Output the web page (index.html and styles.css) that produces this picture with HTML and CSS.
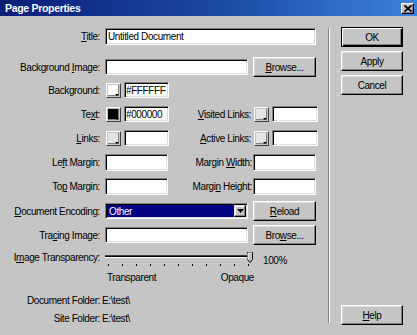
FILE: index.html
```html
<!DOCTYPE html>
<html>
<head>
<meta charset="utf-8">
<title>Page Properties</title>
<link rel="stylesheet" href="styles.css">
</head>
<body>
<div class="win">
  <div class="titlebar">
    <span class="ttl">Page Properties</span>
    <span class="close"><svg width="8" height="7" viewBox="0 0 8 7"><path d="M0.5 0.5 L7.5 6.5 M7.5 0.5 L0.5 6.5" stroke="#000" stroke-width="1.8" fill="none"/></svg></span>
  </div>
  <div class="main">
    <div class="form">
      <div class="row r1"><span class="lbl"><u>T</u>itle:</span><div class="inp wide">Untitled Document</div></div>
      <div class="row r2"><span class="lbl">Background <u>I</u>mage:</span><div class="inp mid"></div><div class="btn bw"><span><u>B</u>rowse...</span></div></div>
      <div class="row r3"><span class="lbl">Background:</span><div class="sw"><i class="fill white"></i><i class="tri"></i></div><div class="inp sm">#FFFFFF</div></div>
      <div class="row"><span class="lbl">Te<u>x</u>t:</span><div class="sw"><i class="fill black"></i><i class="tri"></i></div><div class="inp sm">#000000</div><span class="lbl2"><u>V</u>isited Links:</span><div class="sw"><i class="fill light"></i><i class="tri"></i></div><div class="inp sm2"></div></div>
      <div class="row"><span class="lbl"><u>L</u>inks:</span><div class="sw"><i class="fill light"></i><i class="tri"></i></div><div class="inp sm"></div><span class="lbl2"><u>A</u>ctive Links:</span><div class="sw"><i class="fill light"></i><i class="tri"></i></div><div class="inp sm2"></div></div>
      <div class="row"><span class="lbl">Le<u>f</u>t Margin:</span><div class="inp half"></div><span class="lbl3">Margin <u>W</u>idth:</span><div class="inp half"></div></div>
      <div class="row"><span class="lbl">To<u>p</u> Margin:</span><div class="inp half"></div><span class="lbl3">Margi<u>n</u> Height:</span><div class="inp half"></div></div>
      <div class="row r8"><span class="lbl"><u>D</u>ocument Encoding:</span><div class="sel"><span class="selval">Other</span><span class="arrow"><svg width="7" height="4" viewBox="0 0 7 4"><path d="M0 0 H7 L3.5 4 Z" fill="#000"/></svg></span></div><div class="btn bw"><span><u>R</u>eload</span></div></div>
      <div class="row"><span class="lbl">Tra<u>c</u>ing Image:</span><div class="inp mid"></div><div class="btn bw"><span>Bro<u>w</u>se...</span></div></div>
      <div class="slrow">
        <span class="lbl">I<u>m</u>age Transparency:</span>
        <div class="slider">
          <div class="trackwrap">
            <div class="track"></div>
            <svg class="thumb" width="6" height="11" viewBox="0 0 6 11"><path d="M0.5 0.5 H5.5 V7.5 L3 10.5 L0.5 7.5 Z" fill="#c3c3c3" stroke="#000"/><path d="M1 1 H5 M1 1 V7.5" stroke="#fff" fill="none"/></svg>
          </div>
          <div class="ticks"></div>
          <div class="sllabels"><span>Transparent</span><span>Opaque</span></div>
        </div>
        <span class="pct">100%</span>
      </div>
      <div class="frow f1"><span class="lbl">Document Folder:</span><span class="val">E:\test\</span></div>
      <div class="frow f2"><span class="lbl">Site Folder:</span><span class="val">E:\test\</span></div>
    </div>
    <div class="sep"></div>
    <div class="side">
      <div class="btn sb def"><span>OK</span></div>
      <div class="btn sb"><span>Apply</span></div>
      <div class="btn sb"><span>Cancel</span></div>
      <div class="btn sb help"><span><u>H</u>elp</span></div>
    </div>
  </div>
</div>
</body>
</html>
```

FILE: styles.css
```css
html, body {
  margin: 0;
  padding: 0;
  background: #c5c5c5;
}
body {
  font-family: "Liberation Sans", Arial, sans-serif;
  font-size: 10px;
  letter-spacing: -0.4px;
  color: #000;
}
.win {
  width: 417px;
  height: 335px;
  background: #c5c5c5;
  display: flex;
  flex-direction: column;
  overflow: hidden;
}
.titlebar {
  height: 16px;
  flex: none;
  background: linear-gradient(90deg, #0a1e78 0%, #1c4ba6 55%, #3c84d8 100%);
  display: flex;
  align-items: center;
  padding: 0 3px 0 5px;
}
.ttl {
  flex: 1;
  color: #fff;
  font-weight: bold;
  font-size: 10.5px;
  letter-spacing: -0.3px;
}
.close {
  width: 13px;
  height: 11px;
  box-sizing: border-box;
  background: #c5c5c5;
  border: 1px solid;
  border-color: #fff #000 #000 #fff;
  box-shadow: inset -1px -1px #808080;
  display: flex;
  align-items: center;
  justify-content: center;
}
.main {
  flex: 1;
  display: flex;
}
.form {
  width: 328px;
  flex: none;
}
.sep {
  width: 0;
  border-left: 1px solid #808080;
  border-right: 1px solid #fff;
  margin-top: 12px;
  height: 295px;
}
.side {
  flex: 1;
  display: flex;
  flex-direction: column;
  gap: 4px;
  padding: 11px 0 10px 11px;
}
u { text-decoration: underline; text-underline-offset: 1px; }

.row {
  display: flex;
  align-items: center;
  height: 20px;
  margin-top: 4px;
}
.r1 { margin-top: 11px; height: 19px; }
.r2 { margin-top: 11px; }
.r3 { margin-top: 3px; }
.r8 { margin-top: 5px; }

.lbl {
  width: 100px;
  flex: none;
  text-align: right;
  margin-right: 5px;
  white-space: nowrap;
}
.lbl2 {
  width: 82px;
  flex: none;
  text-align: right;
  margin-right: 2px;
  white-space: nowrap;
}
.lbl3 {
  width: 84px;
  flex: none;
  text-align: right;
  margin-right: 1px;
  white-space: nowrap;
}

.inp {
  box-sizing: border-box;
  height: 17px;
  background: #fff;
  border: 1px solid;
  border-color: #808080 #fff #fff #808080;
  box-shadow: inset 1px 1px #000, inset -1px -1px #dcdcdc;
  padding: 2px 0 0 2px;
  line-height: 12px;
  white-space: nowrap;
  overflow: hidden;
  flex: none;
}
.wide { width: 211px; }
.mid { width: 143px; height: 16px; margin-right: 5px; }
.sm { width: 45px; height: 16px; margin-left: 3px; padding-left: 1px; }
.sm2 { width: 46px; height: 16px; margin-left: 3px; }
.half { width: 63px; }

.sw {
  position: relative;
  box-sizing: border-box;
  width: 15px;
  height: 15px;
  flex: none;
  background: #c5c5c5;
  border: 1px solid;
  border-color: #fff #404040 #404040 #fff;
  margin-left: 1px;
}
.sw .fill {
  position: absolute;
  left: 1px;
  top: 1px;
  width: 10px;
  height: 10px;
  border-right: 1px solid #808080;
  border-bottom: 1px solid #808080;
}
.fill.white { background: #fff; }
.fill.black { background: #000; }
.fill.light { background: #e4e4e4; }
.sw .tri {
  position: absolute;
  right: 1px;
  bottom: 1px;
  width: 0;
  height: 0;
  border-left: 2px solid transparent;
  border-right: 2px solid transparent;
  border-top: 2px solid #000;
}

.btn {
  box-sizing: border-box;
  background: #c5c5c5;
  border: 1px solid;
  border-color: #fff #000 #000 #fff;
  box-shadow: inset -1px -1px #808080, inset 1px 1px #dfdfdf;
  display: flex;
  align-items: center;
  justify-content: center;
  flex: none;
  white-space: nowrap;
}
.bw { width: 63px; height: 20px; }
.sb { width: 62px; height: 20px; }
.def {
  border-color: #000;
  box-shadow: inset 1px 1px #fff, inset -1px -1px #000, inset -2px -2px #808080;
}
.help { margin-top: auto; }

.sel {
  box-sizing: border-box;
  width: 143px;
  height: 16px;
  margin-right: 5px;
  flex: none;
  border: 1px solid;
  border-color: #808080 #fff #fff #808080;
  box-shadow: inset 1px 1px #000, inset -1px -1px #dcdcdc;
  background: #000080;
  padding: 1px;
  display: flex;
}
.selval {
  flex: 1;
  color: #fff;
  padding-left: 2px;
  line-height: 13px;
}
.arrow {
  width: 12px;
  box-sizing: border-box;
  background: #c5c5c5;
  border: 1px solid;
  border-color: #dfdfdf #000 #000 #dfdfdf;
  box-shadow: inset -1px -1px #808080, inset 1px 1px #fff;
  display: flex;
  align-items: center;
  justify-content: center;
}

.slrow {
  display: flex;
  align-items: flex-start;
  margin-top: 5px;
  height: 33px;
}
.slrow .lbl {
  margin-top: 2px;
  line-height: 12px;
}
.slider {
  width: 150px;
  flex: none;
}
.trackwrap {
  position: relative;
  height: 14px;
}
.track {
  position: absolute;
  left: 0;
  top: 5px;
  width: 145px;
  height: 1px;
  border-top: 1px solid #404040;
  border-bottom: 1px solid #fff;
  background: #000;
}
.thumb {
  position: absolute;
  left: 142px;
  top: 2px;
}
.ticks {
  margin-left: 3px;
  width: 141px;
  height: 2px;
  background: repeating-linear-gradient(90deg, #000 0 1px, transparent 1px 14px);
}
.sllabels {
  display: flex;
  justify-content: space-between;
  padding: 6px 0 0 2px;
  width: 147px;
  line-height: 11px;
}
.pct {
  margin-left: 8px;
  margin-top: 5px;
  line-height: 12px;
}

.frow {
  display: flex;
  align-items: center;
  height: 14px;
}
.f1 { margin-top: 10px; }
.f2 { margin-top: 4px; }
.frow .lbl { margin-right: 2px; }
```
